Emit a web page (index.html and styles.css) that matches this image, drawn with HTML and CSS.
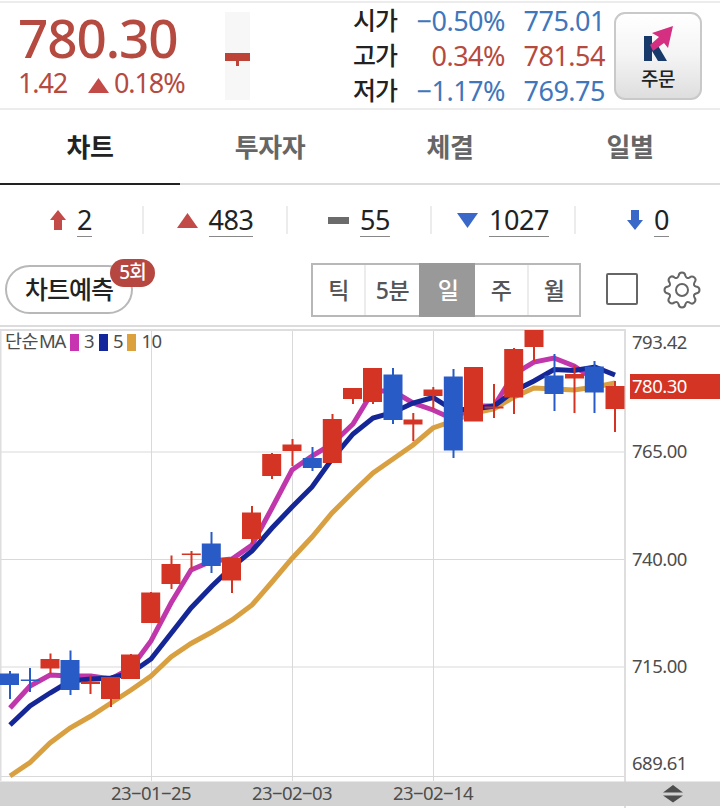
FILE: index.html
```html
<!DOCTYPE html>
<html lang="ko">
<head>
    <meta charset="UTF-8">
    <meta name="viewport" content="width=device-width, initial-scale=1.0">
    <title>차트</title>
    <link rel="stylesheet" href="styles.css">
</head>
<body>
    <header class="quote">
        <div class="price up">
            <div class="price-now">780.30</div>
            <div class="price-change">
                <span class="diff">1.42</span>
                <svg width="21" height="15" viewBox="0 0 21 15"><path d="M10.5 0L21 15H0z" fill="#c24a47"/></svg>
                <span class="rate">0.18%</span>
            </div>
        </div>
        <svg class="mini-candle" width="25" height="88" viewBox="0 0 25 88">
            <path d="M0 41h25v8H14v5h-3v-5H0z" fill="#bd4338"/>
        </svg>
        <div class="ohlc">
            <b>시가</b><span class="down">−0.50%</span><span class="down">775.01</span>
            <b>고가</b><span class="up">0.34%</span><span class="up">781.54</span>
            <b>저가</b><span class="down">−1.17%</span><span class="down">769.75</span>
        </div>
        <button class="order">
            <svg width="32" height="37" viewBox="0 0 32 37">
                <path d="M2 11h8v10l5-2 10 17h-9l-6-10v10H2z" fill="#173a6b"/>
                <path d="M31 1l-5 22-4-5-11 8-3-6 9-8-7-4z" fill="#d42f80"/>
            </svg>
            <span>주문</span>
        </button>
    </header>

    <nav class="tabs">
        <a class="active">차트</a>
        <a>투자자</a>
        <a>체결</a>
        <a>일별</a>
    </nav>

    <div class="counts">
        <div class="count">
            <svg width="16" height="20" viewBox="0 0 16 20"><path d="M8 0l8 10h-4v10H4V10H0z" fill="#c24a47"/></svg>
            <span>2</span>
        </div>
        <div class="count">
            <svg width="21" height="15" viewBox="0 0 21 15"><path d="M10.5 0L21 15H0z" fill="#c24a47"/></svg>
            <span>483</span>
        </div>
        <div class="count">
            <svg width="21" height="7" viewBox="0 0 21 7"><path d="M0 0h21v7H0z" fill="#6b6b6b"/></svg>
            <span>55</span>
        </div>
        <div class="count">
            <svg width="21" height="15" viewBox="0 0 21 15"><path d="M0 0h21L10.5 15z" fill="#3a68c8"/></svg>
            <span>1027</span>
        </div>
        <div class="count">
            <svg width="16" height="20" viewBox="0 0 16 20"><path d="M4 0h8v10h4L8 20 0 10h4z" fill="#3a68c8"/></svg>
            <span>0</span>
        </div>
    </div>

    <div class="toolbar">
        <div class="predict">차트예측<span class="badge">5회</span></div>
        <div class="periods">
            <span>틱</span>
            <span>5분</span>
            <span class="selected">일</span>
            <span>주</span>
            <span>월</span>
        </div>
        <div class="checkbox"></div>
        <svg class="gear" width="38" height="38" viewBox="-19 -19 38 38" fill="none" stroke="#666" stroke-width="2" stroke-linejoin="round">
            <path d="M-3.5 -14Q-3 -17.5 0 -17.5T3.5 -14Q4.5 -11 7.4 -12.4Q10 -14.5 12.4 -12.4T12.4 -7.4Q11 -4.5 14 -3.5Q17.5 -3 17.5 0T14 3.5Q11 4.5 12.4 7.4Q14.5 10 12.4 12.4T7.4 12.4Q4.5 11 3.5 14Q3 17.5 0 17.5T-3.5 14Q-4.5 11 -7.4 12.4Q-10 14.5 -12.4 12.4T-12.4 7.4Q-11 4.5 -14 3.5Q-17.5 3 -17.5 0T-14 -3.5Q-11 -4.5 -12.4 -7.4Q-14.5 -10 -12.4 -12.4T-7.4 -12.4Q-4.5 -11 -3.5 -14z"/>
            <circle r="6"/>
        </svg>
    </div>

    <main class="chart">
        <svg width="720" height="481" viewBox="0 327 720 481">
            <!-- grid -->
            <path class="grid" d="M0 452H625M0 559.500H625M0 667H625M0 776.500H625M151.500 330V781M292.500 330V781M433.500 330V781"/>
            <path class="frame" d="M0 330H625V808M.5 330V781"/>

            <!-- moving averages -->
            <polyline class="ma ma10" points="10,776 30,762.5 50,743 70,728 91,716 111,703 131,690 151,676 171,657 191,643.5 212,632 232,620 252,605 272,582 292,558.5 312,537 332,513 353,492 373,473 393,459 413,445 433,428 453,421 474,413 494,409 514,397 534,388 554,389 574,390 595,387 615,383"/>
            <polyline class="ma ma3" points="10,708 30,686 50,675 70,676 91,676 111,679 131,668 151,641 171,603 191,570 212,561 232,559 252,545 272,508 292,470 312,456 332,444 353,424 373,391 393,391 413,403 433,410 453,419 474,406 494,406 514,374 534,362 554,358 574,366 595,380"/>
            <polyline class="ma ma5" points="10,725 30,706 50,693 70,681 91,679 111,678 131,673 151,659 171,633.5 191,608 212,586 232,567 252,551 272,528 292,507 312,487 332,459 353,434 373,418 393,412.5 413,403 433,397.5 453,410 474,409 494,406 514,391 534,381 554,369.5 574,370.5 595,367 615,375"/>

            <!-- candles: wicks, then bodies -->
            <path class="wick fall" d="M10 671V699M30 668V692M70.500 650.500V695M211.500 532V573M312.500 447V471M393 368V424M453.500 369V458M554.500 354V411M594.500 361V413"/>
            <path class="body fall" d="M9.500 673.500V685M30.300 679.500V681M70 660V690M211.300 543.500V566M312.300 458V468M393 374.500V420M453.300 376.500V450.500M554 375.500V394M594.300 366.500V392.500"/>
            <path class="wick rise" d="M50.500 653.500V674M90.500 675V694M111 677V707M131 654V660M151 592V600M171.500 555.500V589M191.500 551V569M232 557V593M252 506V544M272 453V479M292.500 439V466M332.500 414V420M353 388V404M373 368V404M413.300 413V441M433.300 387V409M494 384V418M514 348V414M534 330V361M574.500 365V413M615 381V432"/>
            <path class="body rise" d="M50 659V668.500M90.500 681.500V684M110.500 677V699M130.500 654.500V679M150.700 592.500V623M171 564V584M191.300 553.500V555M231.500 558V580.500M251.500 512.500V539M271.700 454V476M292 444.500V451M332.300 419V463M352.500 388V399M372.500 368V402M413 419.500V424.500M433 389.500V396M473.500 367V421.500M494 406.500V408.500M513.700 349V397.500M534 330V347M574.500 374V378.500M615 386V409"/>

            <!-- legend -->
            <text class="label" x="5" y="348">단순</text>
            <text class="label ma-name" x="39" y="348">MA</text>
            <path d="M70 334h9v17h-9z" fill="#c733b0"/>
            <text class="label" x="84" y="348">3</text>
            <path d="M99 334h9v17h-9z" fill="#14269c"/>
            <text class="label" x="113" y="348">5</text>
            <path d="M127 334h9v17h-9z" fill="#dca03c"/>
            <text class="label" x="141.500" y="348">10</text>

            <!-- price axis -->
            <text class="label" x="632" y="349">793.42</text>
            <path d="M630 374h90v25h-90z" fill="#d33423"/>
            <text class="label current" x="632" y="393">780.30</text>
            <text class="label" x="632" y="458">765.00</text>
            <text class="label" x="632" y="566">740.00</text>
            <text class="label" x="632" y="673">715.00</text>
            <text class="label" x="632" y="770">689.61</text>

            <!-- date axis -->
            <path d="M0 781.500h720v24.500H0z" fill="#d2d2d2"/>
            <text class="label date" x="151" y="800">23−01−25</text>
            <text class="label date" x="292" y="800">23−02−03</text>
            <text class="label date" x="433" y="800">23−02−14</text>
            <path d="M673 785l10 7.500h-20zM673 802.500l10-7h-20z" fill="#4d4d4d"/>
        </svg>
    </main>
</body>
</html>
```
FILE: styles.css
```css
* {
    box-sizing: border-box;
}

body {
    margin: 0;
    width: 720px;
    height: 808px;
    overflow: hidden;
    background: #fff;
    color: #222;
    font-family: "Noto Sans", "Noto Sans CJK KR", sans-serif;
}

svg {
    display: block;
    flex: none;
}

.up {
    color: #b54a40;
}

.down {
    color: #4076bb;
}

/* quote header */
.quote {
    display: flex;
    margin-top: 1px;
    height: 109px;
    border-top: 2px solid #ececec;
    border-bottom: 2px solid #ececec;
}

.price {
    width: 225px;
    padding: 5px 0 0 18px;
}

.price-now {
    font-size: 53px;
    font-weight: 500;
    line-height: 60px;
    letter-spacing: -1.1px;
}

.price-change {
    display: flex;
    align-items: center;
    height: 30px;
    font-size: 27px;
    line-height: 28px;
    letter-spacing: -1.1px;
}

.diff {
    width: 70px;
}

.price-change svg {
    margin: 4px 5px 0 0;
}

.mini-candle {
    margin-top: 9px;
    background: #f7f7f7;
}

.ohlc {
    display: grid;
    grid-template-columns: 50px 102px 100px;
    grid-auto-rows: 35px;
    align-items: center;
    width: 252px;
    margin: 0 9px 0 103px;
    font-size: 27px;
    line-height: 35px;
    letter-spacing: -0.5px;
    text-align: right;
}

.ohlc b {
    font-size: 25px;
    font-weight: 500;
    letter-spacing: -1px;
    text-align: left;
}

.order {
    display: flex;
    flex-direction: column;
    align-items: center;
    width: 88px;
    height: 88px;
    margin-top: 9px;
    padding: 11px 0 0;
    border: 2px solid #c9c9c9;
    border-radius: 11px;
    background: linear-gradient(#fff, #f4f4f4 50%, #dedede);
    color: #222;
    font: 500 19px/32px "Noto Sans CJK KR", sans-serif;
    letter-spacing: -0.5px;
}

/* tabs */
.tabs {
    display: grid;
    grid-template-columns: repeat(4, 1fr);
    height: 75px;
}

.tabs a {
    padding-top: 2px;
    border-bottom: 2px solid #dcdcdc;
    color: #666;
    font-size: 26px;
    font-weight: 600;
    line-height: 71px;
    letter-spacing: -0.5px;
    text-align: center;
}

.tabs .active {
    border-color: #222;
    color: #222;
}

/* number of rising / falling items */
.counts {
    display: grid;
    grid-template-columns: repeat(5, 1fr);
    height: 65px;
    padding-top: 21px;
}

.count {
    display: flex;
    align-items: center;
    justify-content: center;
    gap: 11px;
    height: 28px;
    border-right: 2px solid #ececec;
    font-size: 27px;
    letter-spacing: -0.5px;
}

.count:last-child {
    border: none;
}

.count span {
    height: 31px;
    margin-top: 3px;
    border-bottom: 1px solid #888;
    line-height: 28px;
}

/* toolbar */
.toolbar {
    display: flex;
    height: 77px;
    border-bottom: 2px solid #dcdcdc;
}

.predict {
    position: relative;
    width: 128px;
    height: 49px;
    margin: 15px 178px 0 5px;
    border: 2px solid #b8b8b8;
    border-radius: 25px;
    font-size: 25px;
    font-weight: 500;
    line-height: 44px;
    letter-spacing: -1px;
    text-align: center;
}

.badge {
    position: absolute;
    top: -8px;
    left: 103px;
    width: 45px;
    height: 28px;
    border-radius: 14px;
    background: #b54640;
    color: #fff;
    font-size: 19px;
    line-height: 26px;
}

.periods {
    display: grid;
    grid-template-columns: 51px 55px 56px 52px 52px;
    width: 270px;
    height: 54px;
    margin-top: 13px;
    border: 2px solid #b8b8b8;
}

.periods span {
    border-left: 2px solid #ececec;
    color: #555;
    font-size: 23px;
    font-weight: 500;
    line-height: 50px;
    letter-spacing: -0.5px;
    text-align: center;
}

.periods span:first-child {
    border: none;
}

.periods .selected {
    margin: -2px 0;
    border-color: #999;
    background: #999;
    color: #fff;
    line-height: 54px;
}

.periods .selected + span {
    border: none;
}

.checkbox {
    width: 32px;
    height: 32px;
    margin: 23px 25px 0;
    border: 2px solid #666;
    border-radius: 2px;
}

.gear {
    margin-top: 21px;
}

/* chart */
.grid,
.frame {
    fill: none;
    stroke: #d9d9d9;
    stroke-width: 1;
}

.frame {
    stroke: #dedede;
    stroke-width: 2;
}

.ma {
    fill: none;
    stroke-width: 5;
}

.ma3 {
    stroke: #c036ab;
}

.ma5 {
    stroke: #152796;
}

.ma10 {
    stroke: #d9a042;
}

.wick {
    stroke-width: 2;
}

.body {
    stroke-width: 19;
}

.rise {
    stroke: #d33423;
}

.fall {
    stroke: #285bc5;
}

.label {
    fill: #4d4d4d;
    font-size: 18.5px;
    letter-spacing: -0.5px;
}

.ma-name {
    letter-spacing: -1.2px;
}

.current {
    fill: #fff;
}

.date {
    letter-spacing: -0.6px;
    text-anchor: middle;
}
```
